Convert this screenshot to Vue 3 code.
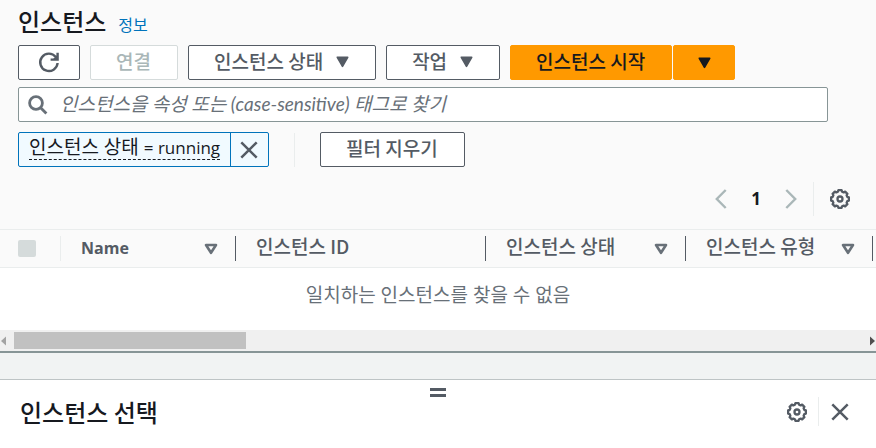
<script setup>
import { ref } from 'vue'

const query = ref('')
const columns = [
  { label: 'Name', latin: true, sortable: true },
  { label: '인스턴스 ID', sortable: false },
  { label: '인스턴스 상태', sortable: true },
  { label: '인스턴스 유형', sortable: true },
]
const scroll = { start: 0, size: 27.4 }

// Eight-toothed cog outline around (10, 10)
const cog = Array.from({ length: 8 }, (_, i) => {
  const at = (deg, r) => {
    const a = ((i * 45 + deg - 90) * Math.PI) / 180
    return `${(10 + r * Math.cos(a)).toFixed(2)} ${(10 + r * Math.sin(a)).toFixed(2)}`
  }
  return `${i ? 'L' : 'M'}${at(-16, 7.6)}L${at(-10, 9)}L${at(10, 9)}L${at(16, 7.6)}`
}).join('') + 'Z'
</script>

<template>
  <div class="page">
    <section class="instances">
      <header class="head">
        <div class="title-row">
          <h1>인스턴스</h1>
          <a class="info" href="#">정보</a>
        </div>

        <div class="actions">
          <button class="btn icon-btn" aria-label="새로 고침">
            <svg width="22" height="22" viewBox="0 0 22 22" fill="none" stroke="currentColor" stroke-width="2.4">
              <path d="M19.6 11A8.7 8.7 0 1 1 17.8 5" />
              <path d="M19.6 .8v6.8h-7" />
              <path d="M19.6 2.4v5.2h-5z" fill="currentColor" stroke="none" />
            </svg>
          </button>
          <button class="btn" disabled>연결</button>
          <button class="btn">
            인스턴스 상태
            <svg class="caret" width="13" height="12" viewBox="0 0 13 12"><path d="M1.3 1.3h10.4L6.5 10.4z" fill="currentColor" stroke="currentColor" stroke-width="1.6" stroke-linejoin="round" /></svg>
          </button>
          <button class="btn">
            작업
            <svg class="caret" width="13" height="12" viewBox="0 0 13 12"><path d="M1.3 1.3h10.4L6.5 10.4z" fill="currentColor" stroke="currentColor" stroke-width="1.6" stroke-linejoin="round" /></svg>
          </button>
          <div class="split">
            <button class="btn primary">인스턴스 시작</button>
            <button class="btn primary icon-btn" aria-label="시작 옵션">
              <svg width="13" height="12" viewBox="0 0 13 12"><path d="M1.3 1.3h10.4L6.5 10.4z" fill="currentColor" stroke="currentColor" stroke-width="1.6" stroke-linejoin="round" /></svg>
            </button>
          </div>
        </div>

        <label class="search">
          <svg width="20" height="20" viewBox="0 0 20 20" fill="none" stroke="currentColor" stroke-width="2.8">
            <circle cx="8" cy="8" r="6.4" />
            <path d="M12.4 12.4l6 6" />
          </svg>
          <input v-model="query" type="text" aria-label="인스턴스 찾기" placeholder="인스턴스을 속성 또는 (case-sensitive) 태그로 찾기" />
        </label>

        <div class="filters">
          <div class="token">
            <button class="token-label"><span>인스턴스 상태 <span class="latin">= running</span></span></button>
            <button class="token-close" aria-label="필터 제거">
              <svg width="18" height="18" viewBox="0 0 18 18" fill="none" stroke="currentColor" stroke-width="2.5"><path d="M1.3 1.3l15.4 15.4M16.7 1.3L1.3 16.7" /></svg>
            </button>
          </div>
          <span class="rule"></span>
          <button class="btn">필터 지우기</button>
        </div>

        <nav class="pager">
          <button class="plain muted" aria-label="이전 페이지" disabled>
            <svg width="12" height="20" viewBox="0 0 12 20" fill="none" stroke="currentColor" stroke-width="2.4"><path d="M10.7 1L1.8 10l8.9 9" /></svg>
          </button>
          <button class="plain current">1</button>
          <button class="plain muted" aria-label="다음 페이지" disabled>
            <svg width="12" height="20" viewBox="0 0 12 20" fill="none" stroke="currentColor" stroke-width="2.4"><path d="M1.3 1l8.9 9-8.9 9" /></svg>
          </button>
          <span class="rule"></span>
          <button class="plain" aria-label="기본 설정">
            <svg width="20" height="20" viewBox="0 0 20 20" fill="none" stroke="currentColor" stroke-width="2.3" stroke-linejoin="round"><path :d="cog" /><circle cx="10" cy="10" r="2.5" /></svg>
          </button>
        </nav>
      </header>

      <div class="table-wrap">
        <table>
          <colgroup>
            <col class="c-check" /><col class="c-name" /><col class="c-id" /><col class="c-state" /><col class="c-type" /><col />
          </colgroup>
          <thead>
            <tr>
              <th class="check"><div class="cell"><input type="checkbox" aria-label="모두 선택" disabled /></div></th>
              <th v-for="c in columns" :key="c.label">
                <div class="cell">
                  <span class="label" :class="{ latin: c.latin }">{{ c.label }}</span>
                  <svg v-if="c.sortable" width="14" height="12" viewBox="0 0 14 12" fill="none" stroke="currentColor" stroke-width="2.6" stroke-linejoin="round"><path d="M2 2h10L7 9.8z" /></svg>
                </div>
              </th>
              <th></th>
            </tr>
          </thead>
        </table>
        <p class="empty">일치하는 인스턴스를 찾을 수 없음</p>
      </div>

      <div class="scrollbar">
        <svg width="7" height="10" viewBox="0 0 7 10"><path d="M6 .5v9L1 5z" fill="#a3a3a3" /></svg>
        <div class="track"><div class="thumb" :style="{ marginLeft: scroll.start + '%', width: scroll.size + '%' }"></div></div>
        <svg width="7" height="10" viewBox="0 0 7 10"><path d="M1 .5v9L6 5z" fill="#505050" /></svg>
      </div>
    </section>

    <section class="panel">
      <div class="grip"><span></span><span></span></div>
      <div class="panel-head">
        <h2>인스턴스 선택</h2>
        <button class="plain" aria-label="패널 설정">
          <svg width="20" height="20" viewBox="0 0 20 20" fill="none" stroke="currentColor" stroke-width="2.3" stroke-linejoin="round"><path :d="cog" /><circle cx="10" cy="10" r="2.5" /></svg>
        </button>
        <span class="rule"></span>
        <button class="plain" aria-label="닫기">
          <svg width="18" height="18" viewBox="0 0 18 18" fill="none" stroke="currentColor" stroke-width="2.5"><path d="M1.3 1.3l15.4 15.4M16.7 1.3L1.3 16.7" /></svg>
        </button>
      </div>
    </section>
  </div>
</template>

<style>
body { margin: 0; background: #fff; }
</style>

<style scoped>
.page {
  font-family: "Open Sans", "Noto Sans CJK KR", sans-serif;
  font-size: 19px;
  line-height: 24px;
  color: #545b64;
  background: #f1f3f3;
  overflow: hidden;
}
.page * { box-sizing: border-box; }
button, input { font: inherit; color: inherit; margin: 0; }
button { cursor: pointer; }
svg { display: block; flex: none; }
h1, h2, p { margin: 0; }
.latin { font-size: 17px; }

.instances { border-bottom: 2px solid #879596; }
.head { background: #fafafa; padding: 7px 48px 13px 18px; }
.title-row { display: flex; align-items: baseline; gap: 12px; height: 38px; }
h1, h2 { font-size: 24px; line-height: 28px; font-weight: 500; color: #16191f; }
h1, h2, .btn, th { font-family: "Noto Sans CJK KR", "Noto Sans", sans-serif; }
.info { font-size: 16px; color: #0073bb; text-decoration: none; }

.actions { display: flex; gap: 10px; }
.btn {
  display: flex;
  align-items: center;
  justify-content: center;
  gap: 13px;
  height: 35px;
  padding: 0 26px 4px 25px;
  border: 1px solid #545b64;
  border-radius: 2px;
  background: #fff;
  font-weight: 500;
  white-space: nowrap;
}
.btn:disabled { color: #aab7b8; border-color: #d5dbdb; }
.btn.icon-btn { width: 62px; padding: 0; }
.caret { margin-top: 3px; }
.primary { background: #f90; border-color: #f90; color: #16191f; }
.split { display: flex; gap: 1px; }

.search {
  display: flex;
  align-items: center;
  gap: 12px;
  height: 35px;
  margin-top: 7px;
  padding: 0 9px;
  border: 1px solid #879596;
  border-radius: 2px;
  background: #fff;
  color: #687078;
}
.search input {
  flex: 1;
  min-width: 0;
  border: 0;
  outline: 0;
  padding: 0 0 2px;
  background: none;
  font-family: Lato, "Noto Sans CJK KR", sans-serif;
}
.search input::placeholder { color: #687078; opacity: 1; font-style: italic; }

.filters { display: flex; align-items: center; margin-top: 10px; }
.token {
  display: flex;
  height: 35px;
  border: 1px solid #0073bb;
  border-radius: 2px;
  background: #f1faff;
}
.token button { border: 0; background: none; padding: 0 10px; }
.token .token-label { color: #16191f; white-space: nowrap; padding-bottom: 3px; }
.token-label > span { display: block; line-height: 23px; border-bottom: 1px dashed #16191f; }
.token .token-close { border-left: 1px solid #0073bb; color: #545b64; padding: 0 10px 0 9px; }
.rule { width: 1px; height: 34px; background: #eaeded; }
.filters .rule { margin: 0 25px; }

.pager { display: flex; align-items: center; justify-content: flex-end; margin: 15px -22px 0 0; }
.plain { border: 0; padding: 0; background: none; color: #545b64; }
.muted { color: #aab7b8; }
.current { font-size: 17px; font-weight: 700; color: #16191f; margin: 0 24px; }
.pager .rule { margin: 0 16px; }

.table-wrap { overflow: hidden; background: #fff; }
table { width: 1200px; table-layout: fixed; border-collapse: collapse; }
.c-check { width: 61px; }
.c-name { width: 175px; }
.c-id { width: 250px; }
.c-state { width: 200px; }
.c-type { width: 187px; }
thead { background: #fafafa; }
th { height: 38px; padding: 0; font-weight: 500; text-align: left; border: solid #eaeded; border-width: 1px 0; }
.cell {
  display: flex;
  align-items: center;
  justify-content: space-between;
  height: 25px;
  padding: 0 17px 0 20px;
  border-right: 1px solid #545b64;
}
.check .cell { padding: 0 18px; border-color: #eaeded; }
.label { padding-bottom: 5px; }
.cell .latin { font-family: "Open Sans", sans-serif; font-size: 16px; font-weight: 700; padding-bottom: 1px; }
.cell svg { color: #687078; }
.check input { appearance: none; width: 18px; height: 17px; border-radius: 2px; background: #d5dbdb; }
.empty { padding: 15px 0 23px; text-align: center; color: #687078; }

.scrollbar { display: flex; align-items: center; gap: 7px; height: 21px; background: #f0f0f0; }
.track { flex: 1; }
.thumb { height: 17px; background: #c1c1c1; }

.panel { margin-top: 26px; padding-bottom: 24px; background: #fff; border-top: 1px solid #bec4c5; }
.grip { display: flex; flex-direction: column; align-items: center; gap: 3px; padding-top: 8px; }
.grip span { width: 16px; height: 3px; background: #545b64; }
.panel-head { display: flex; align-items: center; padding: 0 27px 0 20px; }
h2 { flex: 1; }
.panel-head .rule { height: 29px; margin: 0 12px 0 11px; }
</style>
